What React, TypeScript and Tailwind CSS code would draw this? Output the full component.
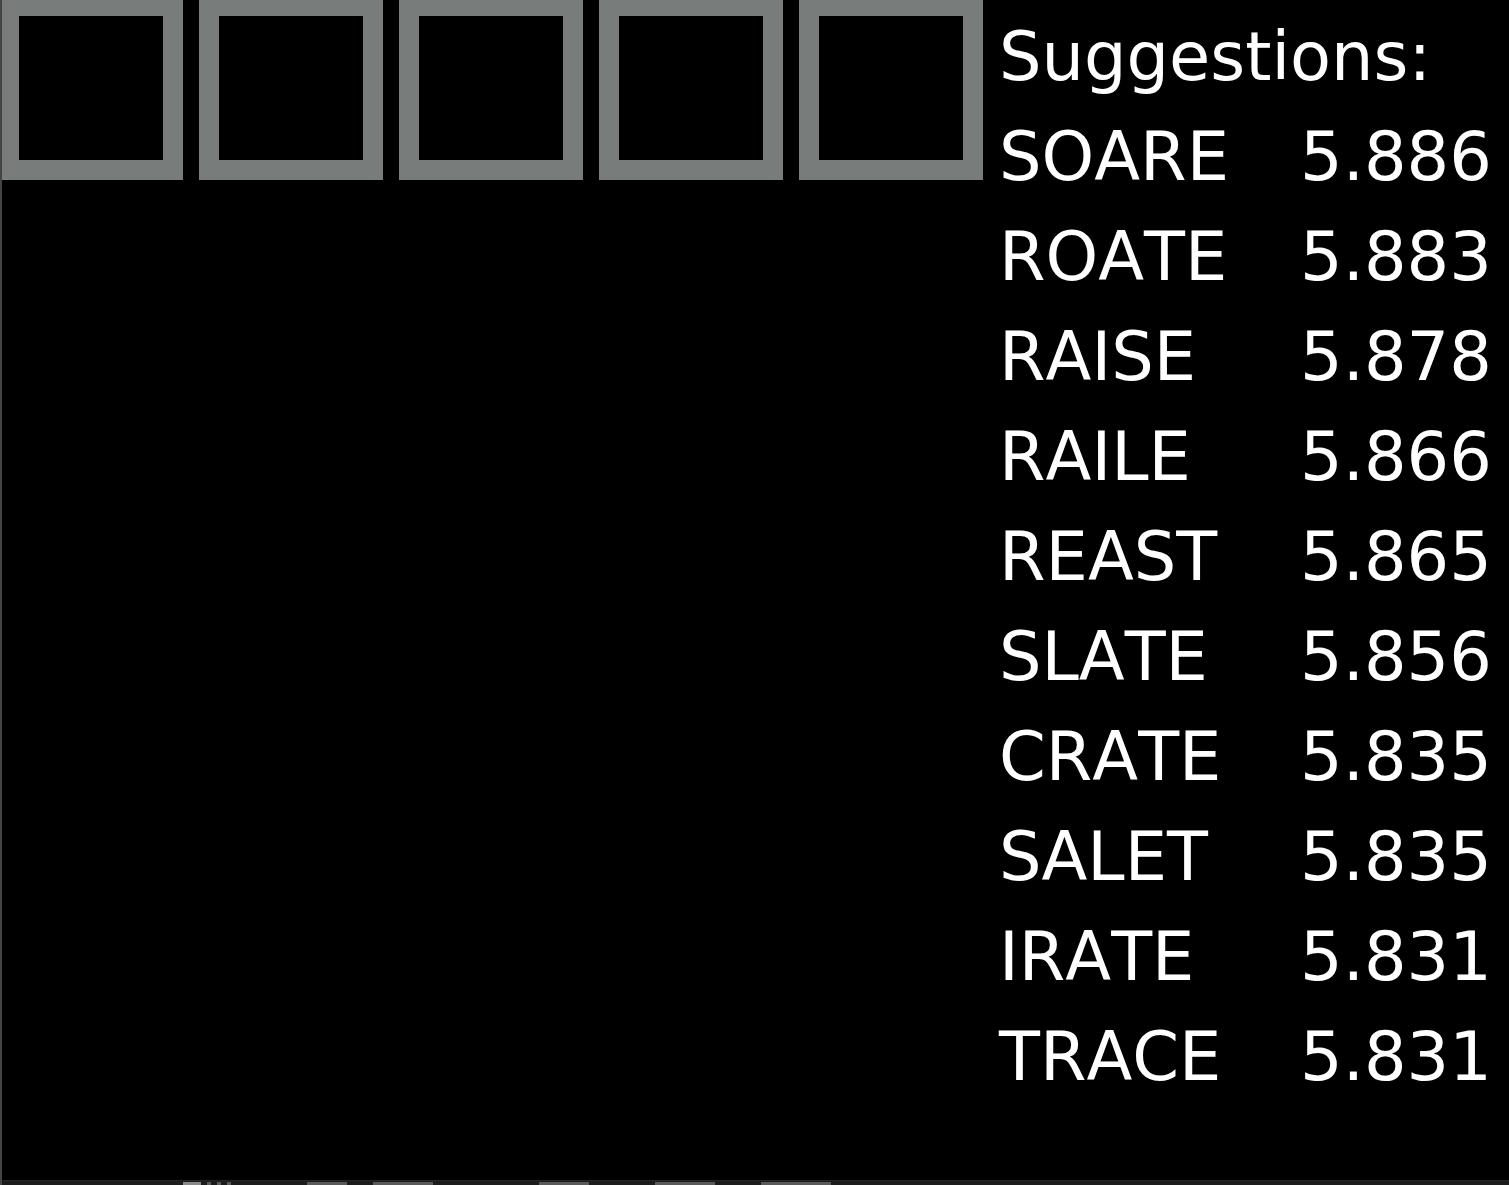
const suggestions: [string, string][] = [
  ["SOARE", "5.886"],
  ["ROATE", "5.883"],
  ["RAISE", "5.878"],
  ["RAILE", "5.866"],
  ["REAST", "5.865"],
  ["SLATE", "5.856"],
  ["CRATE", "5.835"],
  ["SALET", "5.835"],
  ["IRATE", "5.831"],
  ["TRACE", "5.831"],
];

function Tile() {
  return <div className="w-[184px] h-[184px] border-[20px] border-[#787c7b] bg-black shrink-0" />;
}

export default function App() {
  return (
    <div className="relative w-[1509px] h-[1185px] bg-black overflow-hidden font-['DejaVu_Sans',sans-serif] text-white">
      <div className="flex h-[1180px]">
        {/* Guess row */}
        <div className="flex gap-4 ml-[-1px] mt-[-4px] h-[184px]">
          {[0, 1, 2, 3, 4].map((i) => (
            <Tile key={i} />
          ))}
        </div>

        {/* Suggestions list */}
        <div className="ml-[16px] pt-[7px] text-[67px] leading-[100px] [font-kerning:none]">
          <div>Suggestions:</div>
          {suggestions.map(([word, score]) => (
            <div key={word} className="flex">
              <span className="w-[301px]">{word}</span>
              <span>{score}</span>
            </div>
          ))}
        </div>
      </div>

      {/* cut-off bar along the bottom */}
      <div className="flex items-end gap-[6px] h-[5px] bg-[#1c1c1c] border-t border-[#262626] pl-[183px]">
        <span className="w-[18px] h-[3px] bg-[#8a8a8a]" />
        <span className="w-[4px] h-[3px] bg-[#5a5a5a]" />
        <span className="w-[4px] h-[3px] bg-[#5a5a5a]" />
        <span className="w-[4px] h-[3px] bg-[#5a5a5a]" />
        <span className="w-[40px] h-[3px] bg-[#5a5a5a] ml-[70px]" />
        <span className="w-[60px] h-[3px] bg-[#5a5a5a] ml-[20px]" />
        <span className="w-[50px] h-[3px] bg-[#5a5a5a] ml-[100px]" />
        <span className="w-[60px] h-[3px] bg-[#5a5a5a] ml-[60px]" />
        <span className="w-[70px] h-[3px] bg-[#5a5a5a] ml-[40px]" />
      </div>

      {/* window edge */}
      <div className="absolute left-0 top-0 w-[2px] h-full bg-[#454545]" />
    </div>
  );
}
